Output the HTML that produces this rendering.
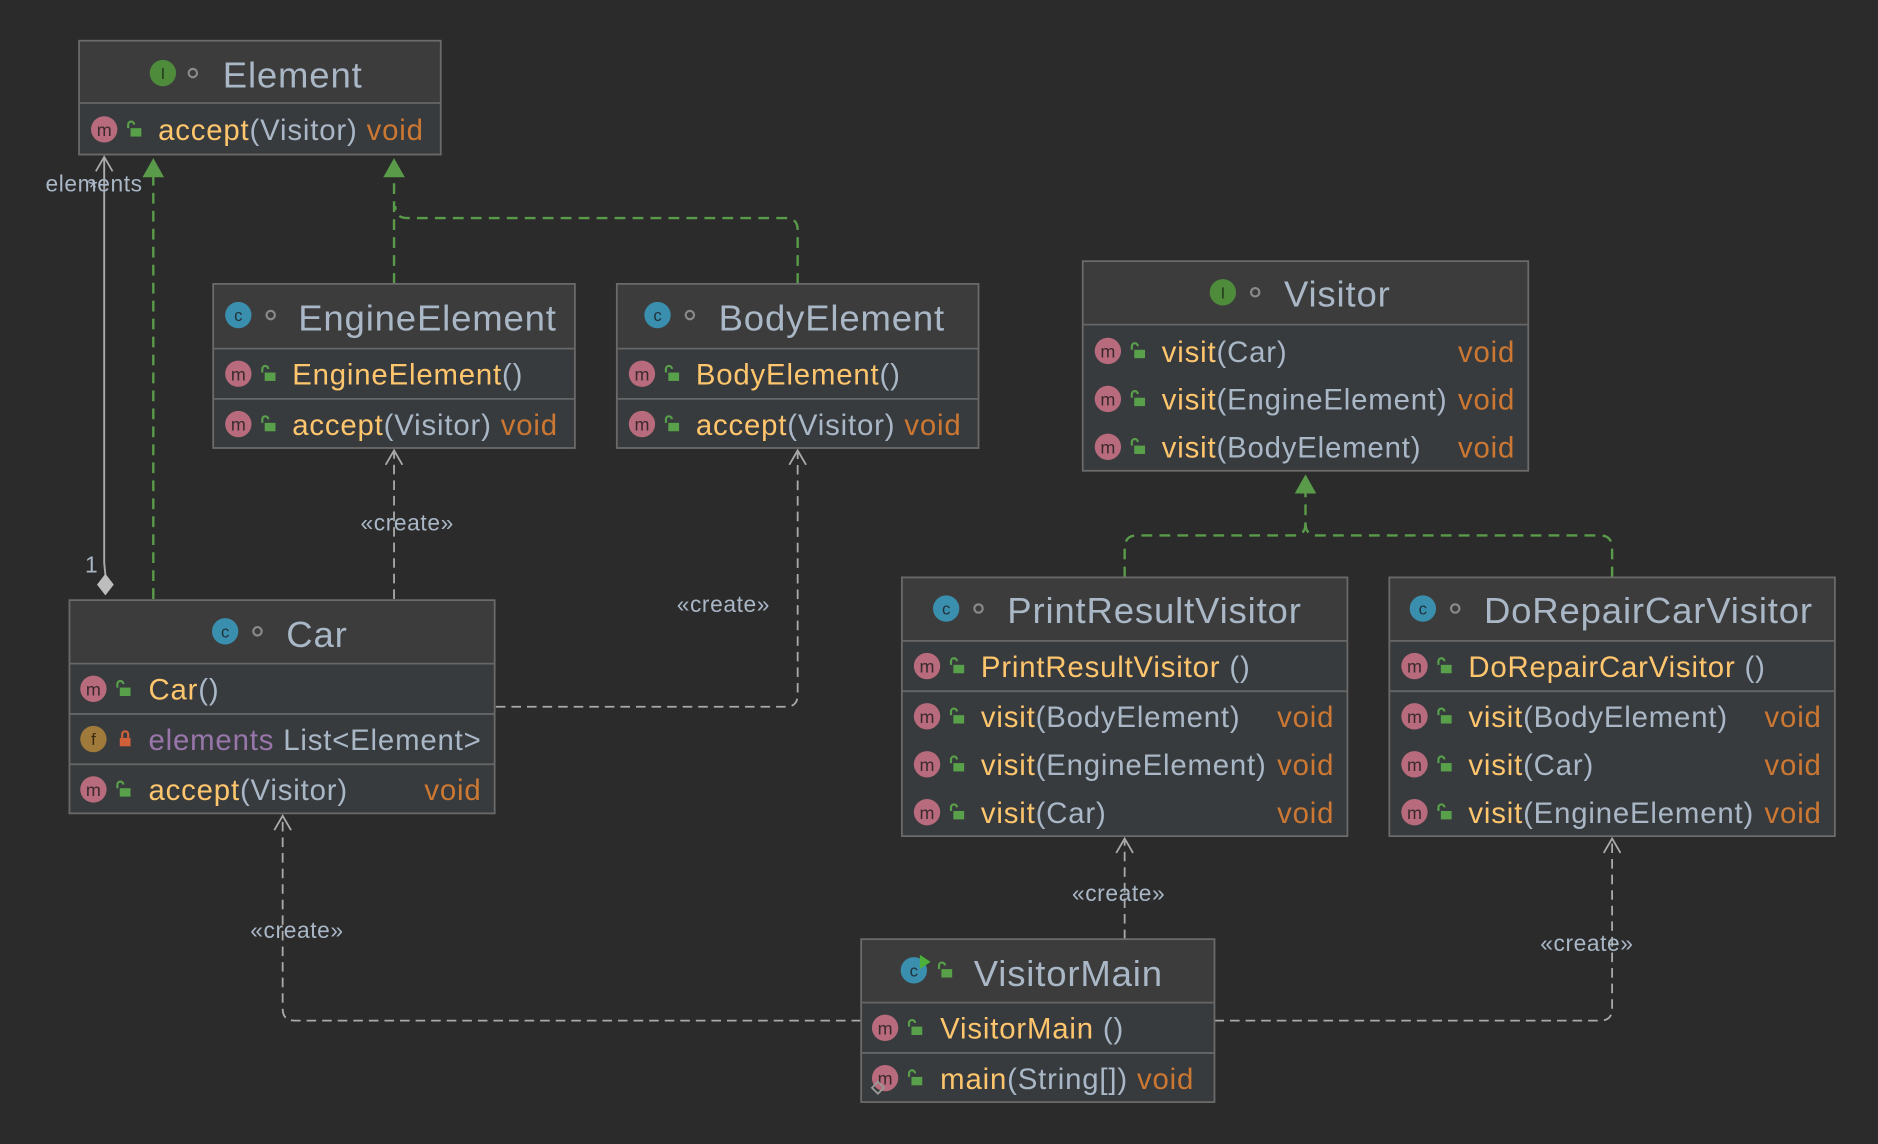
<!DOCTYPE html>
<html><head><meta charset="utf-8"><style>
html,body{margin:0;padding:0;background:#2b2b2b;overflow:hidden}
svg{display:block}
text{font-family:"Liberation Sans","DejaVu Sans",sans-serif}
.t{font-size:30.5px;fill:#a9b7c6;letter-spacing:0.7px}
.r{font-size:24.5px;letter-spacing:0.7px}
.n{fill:#ffc66d}.a{fill:#a9b7c6}.v{fill:#cc7832}.f{fill:#9876aa}
.lbl{font-size:19px;fill:#a9b7c6;letter-spacing:0.5px}
.hd{fill:#3c3c3c;stroke:#6a6a6a;stroke-width:1.5}
.rw{fill:#383b3e}
.sep{stroke:#666;stroke-width:1.5}
.dg{fill:none;stroke:#5a9b4a;stroke-width:2;stroke-dasharray:9,6}
.dw{fill:none;stroke:#aaa;stroke-width:1.5;stroke-dasharray:8,5}
</style></head><body>
<svg width="1878" height="1144" viewBox="0 0 1568 955" preserveAspectRatio="none" xmlns="http://www.w3.org/2000/svg">
<defs>
<g id="m"><circle r="11" fill="#b86b7c"/><text x="0" y="5.5" text-anchor="middle" font-size="15" fill="#3a2a2e" font-family="Liberation Sans,sans-serif">m</text></g>
<g id="c"><circle r="11" fill="#3a8fae"/><text x="0" y="5" text-anchor="middle" font-size="14" fill="#20323a" font-family="Liberation Sans,sans-serif">c</text></g>
<g id="i"><circle r="11" fill="#4e8c3c"/><text x="0" y="5" text-anchor="middle" font-size="13" fill="#1f3319" font-family="Liberation Serif,serif">I</text></g>
<g id="fi"><circle r="11" fill="#a07a3a"/><text x="0" y="5" text-anchor="middle" font-size="14" fill="#3a2a10" font-family="Liberation Sans,sans-serif">f</text></g>
<g id="l"><rect x="-2" y="-2" width="9" height="7" fill="#58a04a"/><path d="M-4,-2 V-5 A2.5,2.5 0 0 1 1,-5" fill="none" stroke="#58a04a" stroke-width="1.8"/></g>
<g id="lr"><rect x="-4" y="-1" width="9" height="7" fill="#d0603a"/><path d="M-2,-1 V-4 A2.5,2.5 0 0 1 3,-4 V-1" fill="none" stroke="#d0603a" stroke-width="1.8"/></g>
<g id="dot"><circle r="3.5" fill="none" stroke="#8a8a8a" stroke-width="1.8"/></g>
<g id="tri"><path d="M-9,16 L0,0 L9,16 Z" fill="#5a9b4a"/></g>
<g id="oa"><path d="M-7,12 L0,0 L7,12" fill="none" stroke="#aaa" stroke-width="1.5"/></g>
</defs>
<rect width="1568" height="955" fill="#2b2b2b"/>

<path d="M87,131 L87,470 L88,480" fill="none" stroke="#aaa" stroke-width="1.6"/>
<use href="#oa" x="87" y="131"/>
<path d="M88,479 L95,488 L88,497 L81,488 Z" fill="#bdbdbd"/>
<text class="lbl" x="38" y="160">elements</text>
<text class="lbl" x="71" y="478">1</text>
<text class="lbl" x="74" y="163" font-size="14">*</text>
<path class="dg" d="M128,500 V146"/><use href="#tri" x="128" y="132"/>
<path class="dg" d="M329,237 V146"/><use href="#tri" x="329" y="132"/>
<path class="dg" d="M666,237 V192 Q666,182 656,182 H340 Q330,182 330,172"/>
<path class="dw" d="M329,500 V378"/><use href="#oa" x="329" y="376"/>
<text class="lbl" x="301" y="443">«create»</text>
<path class="dw" d="M414,590 H656 Q666,590 666,580 V378"/><use href="#oa" x="666" y="376"/>
<text class="lbl" x="565" y="511">«create»</text>
<path class="dg" d="M939,482 V458 Q939,447 949,447 H1080 Q1090,447 1090,437 V410"/>
<path class="dg" d="M1346,482 V458 Q1346,447 1336,447 H1100 Q1090,447 1090,437"/>
<use href="#tri" x="1090" y="396"/>
<path class="dw" d="M939,784 V702"/><use href="#oa" x="939" y="700"/>
<text class="lbl" x="895" y="752">«create»</text>
<path class="dw" d="M719,852 H246 Q236,852 236,842 V683"/><use href="#oa" x="236" y="681"/>
<text class="lbl" x="209" y="783">«create»</text>
<path class="dw" d="M1014,852 H1336 Q1346,852 1346,842 V702"/><use href="#oa" x="1346" y="700"/>
<text class="lbl" x="1286" y="794">«create»</text>

<rect class="hd" x="66" y="34" width="302" height="95"/>
<rect class="rw" x="67" y="87" width="300" height="41"/>
<line class="sep" x1="66" y1="86" x2="368" y2="86"/>
<use href="#i" x="136" y="61"/><use href="#dot" x="161" y="61"/>
<text class="t" x="186" y="73">Element</text>
<use href="#m" x="87" y="108"/><use href="#l" x="111" y="109"/>
<text class="r" x="132" y="117"><tspan class="n">accept</tspan><tspan class="a">(Visitor)</tspan> <tspan class="v">void</tspan></text>

<rect class="hd" x="178" y="237" width="302" height="137"/>
<rect class="rw" x="179" y="292" width="300" height="81"/>
<line class="sep" x1="178" y1="291" x2="480" y2="291"/>
<line class="sep" x1="178" y1="333" x2="480" y2="333"/>
<use href="#c" x="199" y="263"/><use href="#dot" x="226" y="263"/>
<text class="t" x="249" y="276">EngineElement</text>
<use href="#m" x="199" y="312"/><use href="#l" x="223" y="313"/>
<text class="r" x="244" y="321"><tspan class="n">EngineElement</tspan><tspan class="a">()</tspan></text>
<use href="#m" x="199" y="354"/><use href="#l" x="223" y="355"/>
<text class="r" x="244" y="363"><tspan class="n">accept</tspan><tspan class="a">(Visitor)</tspan> <tspan class="v">void</tspan></text>

<rect class="hd" x="515" y="237" width="302" height="137"/>
<rect class="rw" x="516" y="292" width="300" height="81"/>
<line class="sep" x1="515" y1="291" x2="817" y2="291"/>
<line class="sep" x1="515" y1="333" x2="817" y2="333"/>
<use href="#c" x="549" y="263"/><use href="#dot" x="576" y="263"/>
<text class="t" x="600" y="276">BodyElement</text>
<use href="#m" x="536" y="312"/><use href="#l" x="560" y="313"/>
<text class="r" x="581" y="321"><tspan class="n">BodyElement</tspan><tspan class="a">()</tspan></text>
<use href="#m" x="536" y="354"/><use href="#l" x="560" y="355"/>
<text class="r" x="581" y="363"><tspan class="n">accept</tspan><tspan class="a">(Visitor)</tspan> <tspan class="v">void</tspan></text>

<rect class="hd" x="904" y="218" width="372" height="175"/>
<rect class="rw" x="905" y="272" width="370" height="120"/>
<line class="sep" x1="904" y1="271" x2="1276" y2="271"/>
<use href="#i" x="1021" y="244"/><use href="#dot" x="1048" y="244"/>
<text class="t" x="1072" y="256">Visitor</text>
<use href="#m" x="925" y="293"/><use href="#l" x="949" y="294"/>
<text class="r" x="970" y="302"><tspan class="n">visit</tspan><tspan class="a">(Car)</tspan></text>
<text class="r v" x="1265" y="302" text-anchor="end">void</text>
<use href="#m" x="925" y="333"/><use href="#l" x="949" y="334"/>
<text class="r" x="970" y="342"><tspan class="n">visit</tspan><tspan class="a">(EngineElement)</tspan></text>
<text class="r v" x="1265" y="342" text-anchor="end">void</text>
<use href="#m" x="925" y="373"/><use href="#l" x="949" y="374"/>
<text class="r" x="970" y="382"><tspan class="n">visit</tspan><tspan class="a">(BodyElement)</tspan></text>
<text class="r v" x="1265" y="382" text-anchor="end">void</text>

<rect class="hd" x="58" y="501" width="355" height="178"/>
<rect class="rw" x="59" y="555" width="353" height="123"/>
<line class="sep" x1="58" y1="554" x2="413" y2="554"/>
<line class="sep" x1="58" y1="596" x2="413" y2="596"/>
<line class="sep" x1="58" y1="638" x2="413" y2="638"/>
<use href="#c" x="188" y="527"/><use href="#dot" x="215" y="527"/>
<text class="t" x="239" y="540">Car</text>
<use href="#m" x="78" y="575"/><use href="#l" x="102" y="576"/>
<text class="r" x="124" y="584"><tspan class="n">Car</tspan><tspan class="a">()</tspan></text>
<use href="#fi" x="78" y="617"/><use href="#lr" x="104" y="617"/>
<text class="r" x="124" y="626"><tspan class="f">elements</tspan> <tspan class="a">List&lt;Element&gt;</tspan></text>
<use href="#m" x="78" y="659"/><use href="#l" x="102" y="660"/>
<text class="r" x="124" y="668"><tspan class="n">accept</tspan><tspan class="a">(Visitor)</tspan></text>
<text class="r v" x="402" y="668" text-anchor="end">void</text>

<rect class="hd" x="753" y="482" width="372" height="216"/>
<rect class="rw" x="754" y="536" width="370" height="161"/>
<line class="sep" x1="753" y1="535" x2="1125" y2="535"/>
<line class="sep" x1="753" y1="577" x2="1125" y2="577"/>
<use href="#c" x="790" y="508"/><use href="#dot" x="817" y="508"/>
<text class="t" x="841" y="520">PrintResultVisitor</text>
<use href="#m" x="774" y="556"/><use href="#l" x="798" y="557"/>
<text class="r" x="819" y="565"><tspan class="n">PrintResultVisitor </tspan><tspan class="a">()</tspan></text>
<use href="#m" x="774" y="598"/><use href="#l" x="798" y="599"/>
<text class="r" x="819" y="607"><tspan class="n">visit</tspan><tspan class="a">(BodyElement)</tspan></text>
<text class="r v" x="1114" y="607" text-anchor="end">void</text>
<use href="#m" x="774" y="638"/><use href="#l" x="798" y="639"/>
<text class="r" x="819" y="647"><tspan class="n">visit</tspan><tspan class="a">(EngineElement)</tspan></text>
<text class="r v" x="1114" y="647" text-anchor="end">void</text>
<use href="#m" x="774" y="678"/><use href="#l" x="798" y="679"/>
<text class="r" x="819" y="687"><tspan class="n">visit</tspan><tspan class="a">(Car)</tspan></text>
<text class="r v" x="1114" y="687" text-anchor="end">void</text>

<rect class="hd" x="1160" y="482" width="372" height="216"/>
<rect class="rw" x="1161" y="536" width="370" height="161"/>
<line class="sep" x1="1160" y1="535" x2="1532" y2="535"/>
<line class="sep" x1="1160" y1="577" x2="1532" y2="577"/>
<use href="#c" x="1188" y="508"/><use href="#dot" x="1215" y="508"/>
<text class="t" x="1239" y="520">DoRepairCarVisitor</text>
<use href="#m" x="1181" y="556"/><use href="#l" x="1205" y="557"/>
<text class="r" x="1226" y="565"><tspan class="n">DoRepairCarVisitor </tspan><tspan class="a">()</tspan></text>
<use href="#m" x="1181" y="598"/><use href="#l" x="1205" y="599"/>
<text class="r" x="1226" y="607"><tspan class="n">visit</tspan><tspan class="a">(BodyElement)</tspan></text>
<text class="r v" x="1521" y="607" text-anchor="end">void</text>
<use href="#m" x="1181" y="638"/><use href="#l" x="1205" y="639"/>
<text class="r" x="1226" y="647"><tspan class="n">visit</tspan><tspan class="a">(Car)</tspan></text>
<text class="r v" x="1521" y="647" text-anchor="end">void</text>
<use href="#m" x="1181" y="678"/><use href="#l" x="1205" y="679"/>
<text class="r" x="1226" y="687"><tspan class="n">visit</tspan><tspan class="a">(EngineElement)</tspan></text>
<text class="r v" x="1521" y="687" text-anchor="end">void</text>

<rect class="hd" x="719" y="784" width="295" height="136"/>
<rect class="rw" x="720" y="838" width="293" height="81"/>
<line class="sep" x1="719" y1="837" x2="1014" y2="837"/>
<line class="sep" x1="719" y1="879" x2="1014" y2="879"/>
<use href="#c" x="763" y="810"/><path d="M768,797 L777,803 L768,809 Z" fill="#4caf3a"/>
<use href="#l" x="788" y="811"/>
<text class="t" x="813" y="823">VisitorMain</text>
<use href="#m" x="739" y="858"/><use href="#l" x="763" y="859"/>
<text class="r" x="785" y="867"><tspan class="n">VisitorMain </tspan><tspan class="a">()</tspan></text>
<use href="#m" x="739" y="900"/><use href="#l" x="763" y="901"/>
<path d="M733,903 L738,908 L733,913 L728,908 Z" fill="none" stroke="#999" stroke-width="1.5"/>
<text class="r" x="785" y="909"><tspan class="n">main</tspan><tspan class="a">(String[])</tspan> <tspan class="v">void</tspan></text>
</svg>
</body></html>
